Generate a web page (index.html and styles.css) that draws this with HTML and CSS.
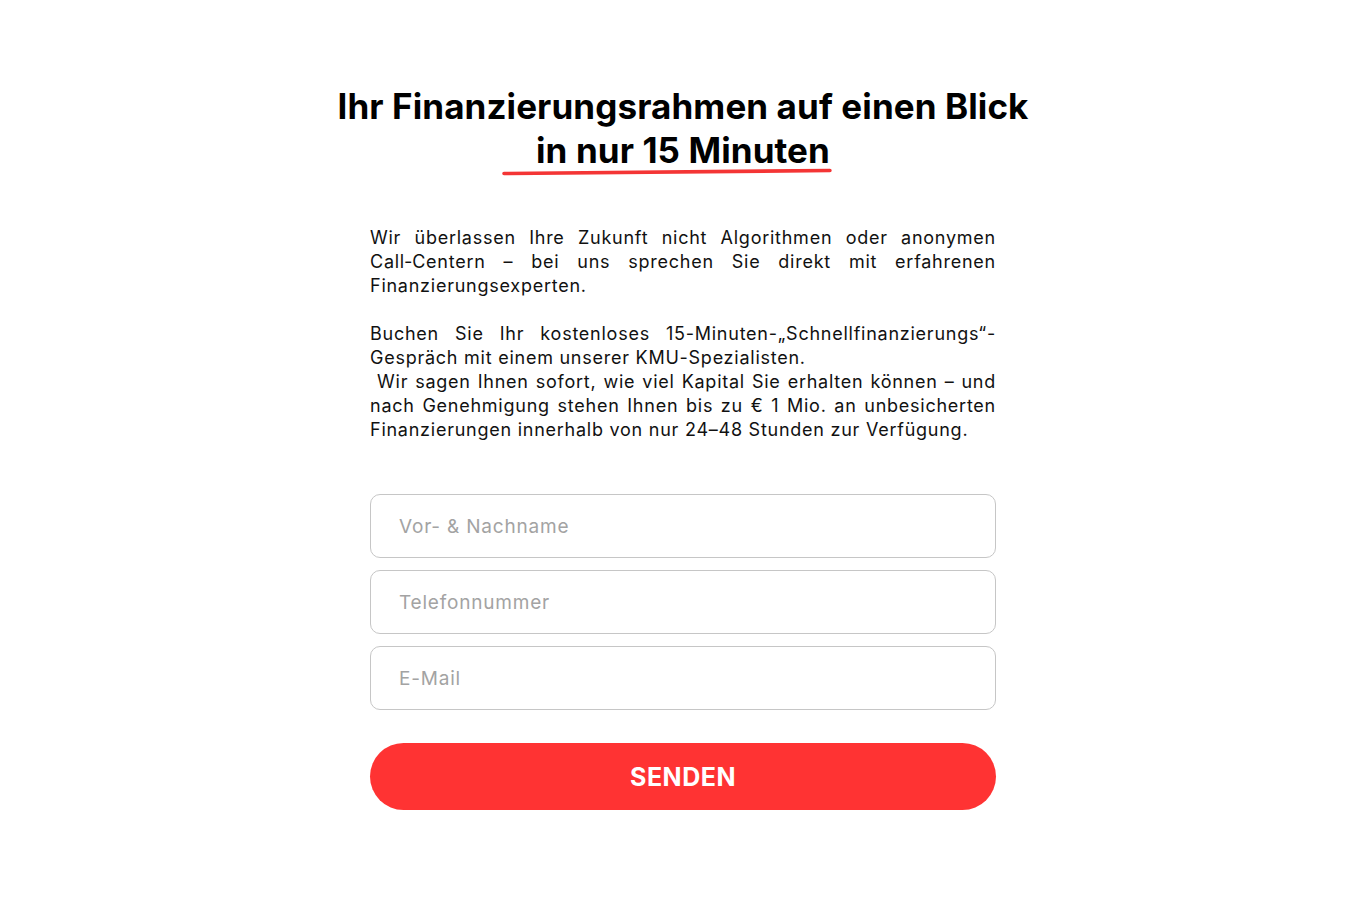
FILE: index.html
```html
<!DOCTYPE html>
<html lang="de">
<head>
<meta charset="utf-8">
<title>Schnellfinanzierung</title>
<link rel="stylesheet" href="styles.css">
</head>
<body>
<main class="page">
  <h1 class="headline">
    <span class="headline-line">Ihr Finanzierungsrahmen auf einen Blick</span>
    <span class="headline-line headline-mark">in nur 15 Minuten<svg class="mark" viewBox="0 0 330 8" preserveAspectRatio="none" aria-hidden="true"><path d="M2 5.5 L328 2.5" stroke="#f43535" stroke-width="3.6" stroke-linecap="round" fill="none"/></svg></span>
  </h1>

  <section class="intro">
    <p>Wir überlassen Ihre Zukunft nicht Algorithmen oder anonymen Call&#8209;Centern – bei uns sprechen Sie direkt mit erfahrenen Finanzierungsexperten.</p>
    <p>Buchen Sie Ihr kostenloses 15-Minuten-„Schnellfinanzierungs“-Gespräch mit einem unserer KMU-Spezialisten.<br>&nbsp;Wir sagen Ihnen sofort, wie viel Kapital Sie erhalten können – und nach Genehmigung stehen Ihnen bis zu € 1 Mio. an unbesicherten Finanzierungen innerhalb von nur 24–48 Stunden zur Verfügung.</p>
  </section>

  <form class="lead-form" onsubmit="return false">
    <input class="field" type="text" placeholder="Vor- &amp; Nachname">
    <input class="field" type="tel" placeholder="Telefonnummer">
    <input class="field" type="email" placeholder="E-Mail">
    <button class="submit" type="submit">SENDEN</button>
  </form>
</main>
</body>
</html>
```

FILE: styles.css
```css
* { box-sizing: border-box; }

html, body {
  margin: 0;
  background: #ffffff;
}

body {
  font-family: "Inter", "Open Sans", "Liberation Sans", sans-serif;
  color: #111;
}

.page {
  width: 626px;
  margin: 0 auto;
  padding-top: 84px;
  display: flex;
  flex-direction: column;
  align-items: stretch;
}

.headline {
  margin: 0 -120px;
  font-size: 35px;
  font-weight: 700;
  line-height: 44px;
  letter-spacing: 0.1px;
  text-align: center;
  color: #000;
  display: flex;
  flex-direction: column;
  align-items: center;
}

.headline-line { display: block; }

.headline-mark {
  position: relative;
}

/* hand-drawn red stroke under the second headline line */
.mark {
  position: absolute;
  left: -34px;
  bottom: -4px;
  width: calc(100% + 36px);
  height: 8px;
}

.intro {
  margin-top: 54px;
  font-size: 18px;
  line-height: 24px;
  letter-spacing: 0.75px;
  text-align: justify;
  color: #111;
}

.intro p { margin: 0 0 24px; }
.intro p:last-child { margin-bottom: 0; }

.lead-form {
  margin-top: 52px;
  display: flex;
  flex-direction: column;
  gap: 12px;
}

.field {
  height: 64px;
  width: 100%;
  border: 1.5px solid #c6c6c6;
  border-radius: 10px;
  padding: 0 28px;
  font-family: inherit;
  font-size: 19px;
  letter-spacing: 0.8px;
  color: #333;
  background: #fff;
  outline: none;
}

.field::placeholder {
  color: #a3a3a3;
}

.submit {
  margin-top: 21px;
  height: 67px;
  width: 100%;
  border: none;
  border-radius: 34px;
  background: #ff3333;
  color: #fff;
  font-family: inherit;
  font-size: 25px;
  font-weight: 700;
  letter-spacing: 0.5px;
  cursor: pointer;
}
```
